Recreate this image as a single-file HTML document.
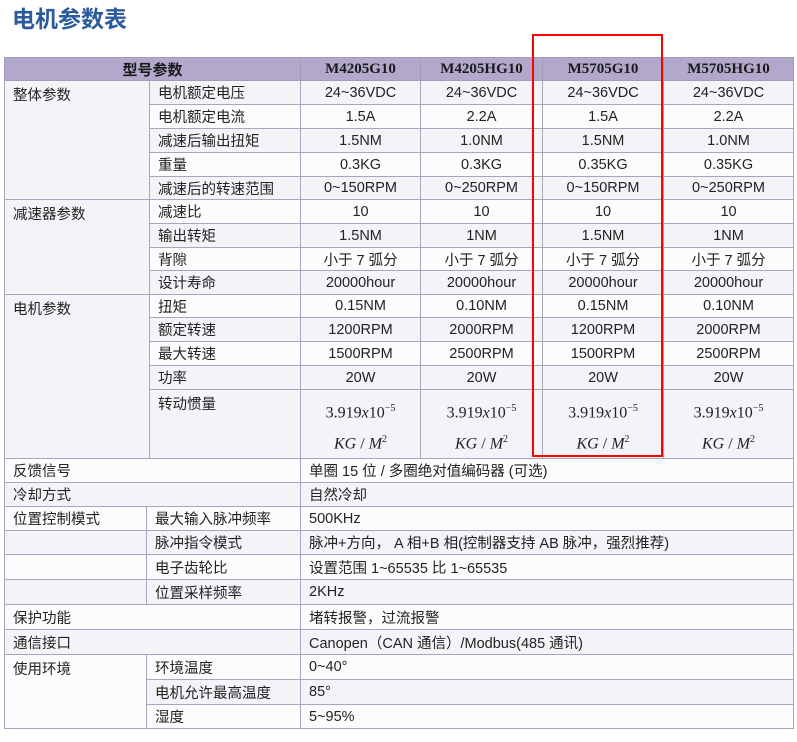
<!DOCTYPE html>
<html><head><meta charset="utf-8"><style>
body{margin:0;width:797px;height:742px;background:#fff;position:relative;overflow:hidden;font-family:"Liberation Sans","Noto Sans CJK SC",sans-serif;color:#222;}
h1{position:absolute;left:12px;top:0px;margin:0;font-size:23px;color:#2c5b9c;font-weight:bold;}
table{position:absolute;left:4px;border-collapse:collapse;table-layout:fixed;font-size:14.5px;}
td{border:1px solid #a9a5be;padding:0 0 0 8px;white-space:nowrap;overflow:hidden;background:#f4f3f8;}
td.c{text-align:center;padding:0;}
tr.w td{background:#fcfcfe;}
tr.h td{background:#b2a8cc;font-family:"Liberation Serif","Noto Serif CJK SC",serif;font-weight:bold;font-size:15px;text-align:center;padding:0;border-color:#a29ab9;color:#1a1a1a;}
tr.h td.s{font-family:"Liberation Sans","Noto Sans CJK SC",sans-serif;}
td.top{vertical-align:top;padding-top:3px;}
.m{font-family:"Liberation Serif",serif;font-size:16px;line-height:26px;padding-top:4px !important;}
.m i{font-style:italic}
#red{position:absolute;left:532px;top:34px;width:127px;height:419px;border:2.5px solid #f00;}
</style></head><body>
<h1>电机参数表</h1>
<table style="top:57px;width:789px">
<colgroup><col style="width:145px"><col style="width:151px"><col style="width:120px"><col style="width:122px"><col style="width:121px"><col style="width:130px"></colgroup>
<tr class="h" style="height:23px"><td colspan="2" class="s">型号参数</td><td>M4205G10</td><td>M4205HG10</td><td>M5705G10</td><td>M5705HG10</td></tr>
<tr style="height:24px"><td rowspan="5" class="top">整体参数</td><td>电机额定电压</td><td class="c">24~36VDC</td><td class="c">24~36VDC</td><td class="c">24~36VDC</td><td class="c">24~36VDC</td></tr>
<tr class="w" style="height:24px"><td>电机额定电流</td><td class="c">1.5A</td><td class="c">2.2A</td><td class="c">1.5A</td><td class="c">2.2A</td></tr>
<tr style="height:24px"><td>减速后输出扭矩</td><td class="c">1.5NM</td><td class="c">1.0NM</td><td class="c">1.5NM</td><td class="c">1.0NM</td></tr>
<tr class="w" style="height:24px"><td>重量</td><td class="c">0.3KG</td><td class="c">0.3KG</td><td class="c">0.35KG</td><td class="c">0.35KG</td></tr>
<tr style="height:23px"><td>减速后的转速范围</td><td class="c">0~150RPM</td><td class="c">0~250RPM</td><td class="c">0~150RPM</td><td class="c">0~250RPM</td></tr>
<tr class="w" style="height:24px"><td rowspan="4" class="top" style="background:#f4f3f8">减速器参数</td><td>减速比</td><td class="c">10</td><td class="c">10</td><td class="c">10</td><td class="c">10</td></tr>
<tr style="height:24px"><td>输出转矩</td><td class="c">1.5NM</td><td class="c">1NM</td><td class="c">1.5NM</td><td class="c">1NM</td></tr>
<tr class="w" style="height:23px"><td>背隙</td><td class="c">小于 7 弧分</td><td class="c">小于 7 弧分</td><td class="c">小于 7 弧分</td><td class="c">小于 7 弧分</td></tr>
<tr style="height:24px"><td>设计寿命</td><td class="c">20000hour</td><td class="c">20000hour</td><td class="c">20000hour</td><td class="c">20000hour</td></tr>
<tr class="w" style="height:23px"><td rowspan="5" class="top" style="background:#f4f3f8">电机参数</td><td>扭矩</td><td class="c">0.15NM</td><td class="c">0.10NM</td><td class="c">0.15NM</td><td class="c">0.10NM</td></tr>
<tr style="height:24px"><td>额定转速</td><td class="c">1200RPM</td><td class="c">2000RPM</td><td class="c">1200RPM</td><td class="c">2000RPM</td></tr>
<tr class="w" style="height:24px"><td>最大转速</td><td class="c">1500RPM</td><td class="c">2500RPM</td><td class="c">1500RPM</td><td class="c">2500RPM</td></tr>
<tr style="height:24px"><td>功率</td><td class="c">20W</td><td class="c">20W</td><td class="c">20W</td><td class="c">20W</td></tr>
<tr style="height:70px"><td class="top">转动惯量</td>
<td class="c m">3.919<i>x</i>10<sup style="font-size:10px">−5</sup><br><i>KG</i> / <i>M</i><sup style="font-size:10px">2</sup></td>
<td class="c m">3.919<i>x</i>10<sup style="font-size:10px">−5</sup><br><i>KG</i> / <i>M</i><sup style="font-size:10px">2</sup></td>
<td class="c m">3.919<i>x</i>10<sup style="font-size:10px">−5</sup><br><i>KG</i> / <i>M</i><sup style="font-size:10px">2</sup></td>
<td class="c m">3.919<i>x</i>10<sup style="font-size:10px">−5</sup><br><i>KG</i> / <i>M</i><sup style="font-size:10px">2</sup></td></tr>
</table>
<table style="top:458px;width:789px">
<colgroup><col style="width:142px"><col style="width:154px"><col style="width:493px"></colgroup>
<tr class="w" style="height:24px"><td colspan="2">反馈信号</td><td>单圈 15 位 / 多圈绝对值编码器 (可选)</td></tr>
<tr style="height:24px"><td colspan="2">冷却方式</td><td>自然冷却</td></tr>
<tr class="w" style="height:24px"><td>位置控制模式</td><td>最大输入脉冲频率</td><td>500KHz</td></tr>
<tr style="height:24px"><td></td><td>脉冲指令模式</td><td>脉冲+方向， A 相+B 相(控制器支持 AB 脉冲，强烈推荐)</td></tr>
<tr class="w" style="height:25px"><td></td><td>电子齿轮比</td><td>设置范围 1~65535 比 1~65535</td></tr>
<tr style="height:25px"><td></td><td>位置采样频率</td><td>2KHz</td></tr>
<tr class="w" style="height:25px"><td colspan="2">保护功能</td><td>堵转报警，过流报警</td></tr>
<tr style="height:25px"><td colspan="2">通信接口</td><td>Canopen（CAN 通信）/Modbus(485 通讯)</td></tr>
<tr class="w" style="height:25px"><td rowspan="3" class="top" style="background:#fcfcfe">使用环境</td><td>环境温度</td><td>0~40°</td></tr>
<tr style="height:25px"><td>电机允许最高温度</td><td>85°</td></tr>
<tr class="w" style="height:24px"><td>湿度</td><td>5~95%</td></tr>
</table>
<div id="red"></div>
</body></html>
